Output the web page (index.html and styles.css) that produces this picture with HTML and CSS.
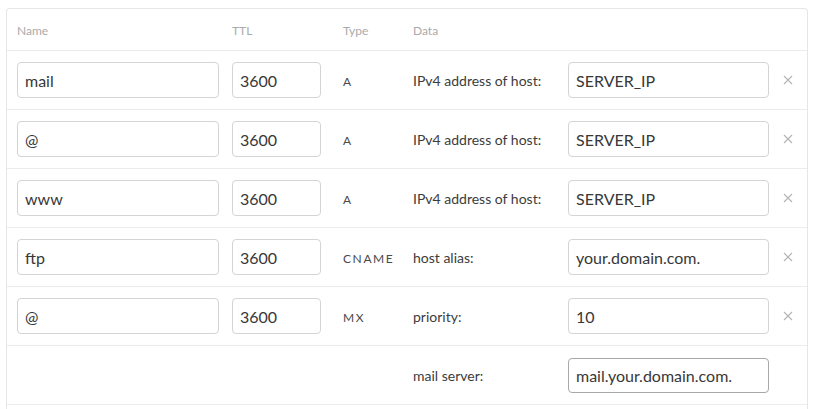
FILE: index.html
```html
<!DOCTYPE html>
<html>
<head>
<meta charset="utf-8">
<link rel="stylesheet" href="styles.css">
</head>
<body>
<div class="records">
  <div class="row head">
    <div class="cell">Name</div>
    <div class="cell">TTL</div>
    <div class="cell">Type</div>
    <div class="cell">Data</div>
    <div class="cell"></div>
    <div class="cell"></div>
  </div>
  <div class="row">
    <div class="cell"><input class="inp name" value="mail"></div>
    <div class="cell"><input class="inp ttl" value="3600"></div>
    <div class="cell type">A</div>
    <div class="cell label">IPv4 address of host:</div>
    <div class="cell"><input class="inp data" value="SERVER_IP"></div>
    <div class="cell"><svg class="x" viewBox="0 0 10 10"><path d="M1 1L9 9M9 1L1 9"/></svg></div>
  </div>
  <div class="row">
    <div class="cell"><input class="inp name" value="@"></div>
    <div class="cell"><input class="inp ttl" value="3600"></div>
    <div class="cell type">A</div>
    <div class="cell label">IPv4 address of host:</div>
    <div class="cell"><input class="inp data" value="SERVER_IP"></div>
    <div class="cell"><svg class="x" viewBox="0 0 10 10"><path d="M1 1L9 9M9 1L1 9"/></svg></div>
  </div>
  <div class="row">
    <div class="cell"><input class="inp name" value="www"></div>
    <div class="cell"><input class="inp ttl" value="3600"></div>
    <div class="cell type">A</div>
    <div class="cell label">IPv4 address of host:</div>
    <div class="cell"><input class="inp data" value="SERVER_IP"></div>
    <div class="cell"><svg class="x" viewBox="0 0 10 10"><path d="M1 1L9 9M9 1L1 9"/></svg></div>
  </div>
  <div class="row">
    <div class="cell"><input class="inp name" value="ftp"></div>
    <div class="cell"><input class="inp ttl" value="3600"></div>
    <div class="cell type">CNAME</div>
    <div class="cell label">host alias:</div>
    <div class="cell"><input class="inp data" value="your.domain.com."></div>
    <div class="cell"><svg class="x" viewBox="0 0 10 10"><path d="M1 1L9 9M9 1L1 9"/></svg></div>
  </div>
  <div class="row">
    <div class="cell"><input class="inp name" value="@"></div>
    <div class="cell"><input class="inp ttl" value="3600"></div>
    <div class="cell type">MX</div>
    <div class="cell label">priority:</div>
    <div class="cell"><input class="inp data" value="10"></div>
    <div class="cell"><svg class="x" viewBox="0 0 10 10"><path d="M1 1L9 9M9 1L1 9"/></svg></div>
  </div>
  <div class="row">
    <div class="cell"></div>
    <div class="cell"></div>
    <div class="cell"></div>
    <div class="cell label">mail server:</div>
    <div class="cell"><input class="inp data focus" value="mail.your.domain.com."></div>
    <div class="cell"></div>
  </div>
</div>
</body>
</html>
```

FILE: styles.css
```css
html, body {
  margin: 0;
  padding: 0;
  background: #fff;
}
body {
  font-family: Lato, "Open Sans", sans-serif;
  color: #3a3a3a;
}
.records {
  margin: 8px 5px 0 6px;
  border: 1px solid #e6e6e6;
  border-bottom: none;
  border-radius: 4px 4px 0 0;
  height: 420px;
  box-sizing: border-box;
}
.row {
  display: grid;
  grid-template-columns: 215px 111px 70px 155px 201px 1fr;
  padding-left: 10px;
  height: 59px;
  box-sizing: border-box;
  align-items: center;
  border-bottom: 1px solid #ececec;
}
.row.head {
  height: 42px;
  font-size: 12px;
  color: #aaaaaa;
}
.row.head .cell {
  padding-top: 1px;
}
.inp {
  display: block;
  box-sizing: border-box;
  height: 36px;
  border: 1px solid #d4d4d4;
  border-radius: 4px;
  padding: 0 7px;
  font-family: Lato, "Open Sans", sans-serif;
  font-size: 16px;
  color: #383838;
  background: #fff;
  outline: none;
  margin: 0;
}
.inp.name { width: 202px; }
.inp.ttl { width: 89px; }
.inp.data { width: 201px; }
.inp.focus {
  border-color: #a8a8a8;
  height: 35px;
}
.type {
  font-size: 12px;
  letter-spacing: 1.6px;
  color: #4a4a4a;
  padding-top: 3px;
}
.label {
  font-size: 14px;
  color: #3c3c3c;
}
.x {
  display: block;
  width: 10px;
  height: 10px;
  margin-left: 14px;
  stroke: #b4b4b4;
  stroke-width: 1.1;
  fill: none;
}
```
